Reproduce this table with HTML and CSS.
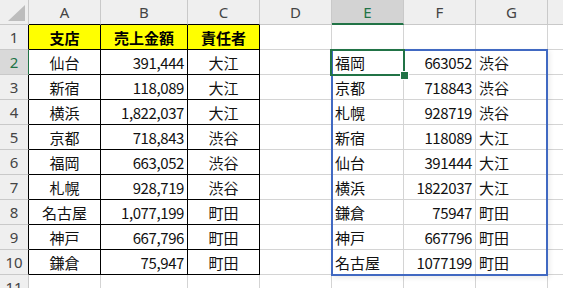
FILE: index.html
```html
<!DOCTYPE html>
<html lang="ja">
<head>
<meta charset="utf-8">
<link rel="stylesheet" href="styles.css">
</head>
<body>
<div class="sheet">
  <div class="grid">
    <div class="cell corner"><svg width="17" height="16" viewBox="0 0 17 16"><polygon points="0,16 17,16 17,0" fill="#bdbdbd"/></svg></div>
    <div class="cell ch tb">A</div>
    <div class="cell ch tb">B</div>
    <div class="cell ch tb">C</div>
    <div class="cell ch">D</div>
    <div class="cell ch sel">E</div>
    <div class="cell ch">F</div>
    <div class="cell ch">G</div>
    <div class="cell ch last"></div>

    <div class="cell rh tl">1</div>
    <div class="cell t hd">支店</div>
    <div class="cell t hd">売上金額</div>
    <div class="cell t hd">責任者</div>
    <div class="cell"></div><div class="cell"></div><div class="cell"></div><div class="cell"></div><div class="cell last"></div>

    <div class="cell rh selr">2</div>
    <div class="cell t c">仙台</div><div class="cell t r">391,444</div><div class="cell t c">大江</div>
    <div class="cell"></div><div class="cell l">福岡</div><div class="cell r">663052</div><div class="cell l">渋谷</div><div class="cell last"></div>

    <div class="cell rh tl">3</div>
    <div class="cell t c">新宿</div><div class="cell t r">118,089</div><div class="cell t c">大江</div>
    <div class="cell"></div><div class="cell l">京都</div><div class="cell r">718843</div><div class="cell l">渋谷</div><div class="cell last"></div>

    <div class="cell rh tl">4</div>
    <div class="cell t c">横浜</div><div class="cell t r">1,822,037</div><div class="cell t c">大江</div>
    <div class="cell"></div><div class="cell l">札幌</div><div class="cell r">928719</div><div class="cell l">渋谷</div><div class="cell last"></div>

    <div class="cell rh tl">5</div>
    <div class="cell t c">京都</div><div class="cell t r">718,843</div><div class="cell t c">渋谷</div>
    <div class="cell"></div><div class="cell l">新宿</div><div class="cell r">118089</div><div class="cell l">大江</div><div class="cell last"></div>

    <div class="cell rh tl">6</div>
    <div class="cell t c">福岡</div><div class="cell t r">663,052</div><div class="cell t c">渋谷</div>
    <div class="cell"></div><div class="cell l">仙台</div><div class="cell r">391444</div><div class="cell l">大江</div><div class="cell last"></div>

    <div class="cell rh tl">7</div>
    <div class="cell t c">札幌</div><div class="cell t r">928,719</div><div class="cell t c">渋谷</div>
    <div class="cell"></div><div class="cell l">横浜</div><div class="cell r">1822037</div><div class="cell l">大江</div><div class="cell last"></div>

    <div class="cell rh tl">8</div>
    <div class="cell t c">名古屋</div><div class="cell t r">1,077,199</div><div class="cell t c">町田</div>
    <div class="cell"></div><div class="cell l">鎌倉</div><div class="cell r">75947</div><div class="cell l">町田</div><div class="cell last"></div>

    <div class="cell rh tl">9</div>
    <div class="cell t c">神戸</div><div class="cell t r">667,796</div><div class="cell t c">町田</div>
    <div class="cell"></div><div class="cell l">神戸</div><div class="cell r">667796</div><div class="cell l">町田</div><div class="cell last"></div>

    <div class="cell rh tl">10</div>
    <div class="cell t c">鎌倉</div><div class="cell t r">75,947</div><div class="cell t c">町田</div>
    <div class="cell"></div><div class="cell l">名古屋</div><div class="cell r">1077199</div><div class="cell l">町田</div><div class="cell last"></div>

    <div class="cell rh">11</div>
    <div class="cell"></div><div class="cell"></div><div class="cell"></div><div class="cell"></div><div class="cell"></div><div class="cell"></div><div class="cell"></div><div class="cell last"></div>
  </div>
  <div class="range"></div>
  <div class="selection"><div class="handle"></div></div>
</div>
</body>
</html>
```
FILE: styles.css
```css
html, body {
  margin: 0;
  padding: 0;
  background: #ffffff;
}
body {
  width: 563px;
  height: 288px;
  overflow: hidden;
  font-family: "Noto Sans CJK JP", "Noto Sans", sans-serif;
  font-size: 15px;
  color: #111;
}
.sheet {
  position: relative;
  width: 563px;
  height: 288px;
}
.grid {
  display: grid;
  grid-template-columns: 29px 72px 87px 72px 72px 72px 72px 72px 1fr;
  grid-auto-rows: 25px;
}
.cell {
  box-sizing: border-box;
  border-right: 1px solid #d4d4d4;
  border-bottom: 1px solid #d4d4d4;
  display: flex;
  align-items: center;
  white-space: nowrap;
  overflow: hidden;
  line-height: 1;
  padding-top: 1px;
}
.cell.last { border-right: none; }
.corner {
  background: #efefef;
  border-right-color: #c9c9c9;
  border-bottom-color: #c9c9c9;
  justify-content: flex-end;
  align-items: flex-end;
  padding: 0 3px 3px 0;
}
.ch {
  background: #efefef;
  border-right-color: #c9c9c9;
  border-bottom-color: #c9c9c9;
  justify-content: center;
  font-family: "Noto Sans", "Liberation Sans", sans-serif;
  font-size: 15px;
  color: #444;
}
.ch.tb { border-bottom-color: #000; }
.ch.sel {
  background: #d3d3d3;
  color: #217346;
  border-bottom: 2px solid #217346;
}
.rh {
  background: #efefef;
  border-right-color: #c9c9c9;
  border-bottom-color: #c9c9c9;
  justify-content: center;
  font-family: "Noto Sans", "Liberation Sans", sans-serif;
  font-size: 15px;
  color: #444;
}
.rh.tl { border-right-color: #000; }
.rh.selr {
  background: #d9d9d9;
  color: #217346;
  border-right: 1px solid #217346;
}
.t {
  border-right-color: #000;
  border-bottom-color: #000;
}
.hd {
  background: #ffff00;
  font-weight: bold;
  justify-content: center;
  color: #000;
}
.c { justify-content: center; }
.r { justify-content: flex-end; padding-right: 3px; letter-spacing: -0.4px; }
.l { justify-content: flex-start; padding-left: 3px; }

.range {
  position: absolute;
  left: 331px;
  top: 49px;
  width: 217px;
  height: 227px;
  box-sizing: border-box;
  border: 2px solid #4169c2;
  box-shadow: 2px 2px 5px rgba(0, 0, 0, 0.08);
  pointer-events: none;
}
.selection {
  position: absolute;
  left: 330px;
  top: 49px;
  width: 75px;
  height: 27px;
  box-sizing: border-box;
  border: 2px solid #217346;
}
.handle {
  position: absolute;
  right: -5px;
  bottom: -5px;
  width: 7px;
  height: 7px;
  box-sizing: border-box;
  background: #217346;
  outline: 1px solid #fff;
}
```
